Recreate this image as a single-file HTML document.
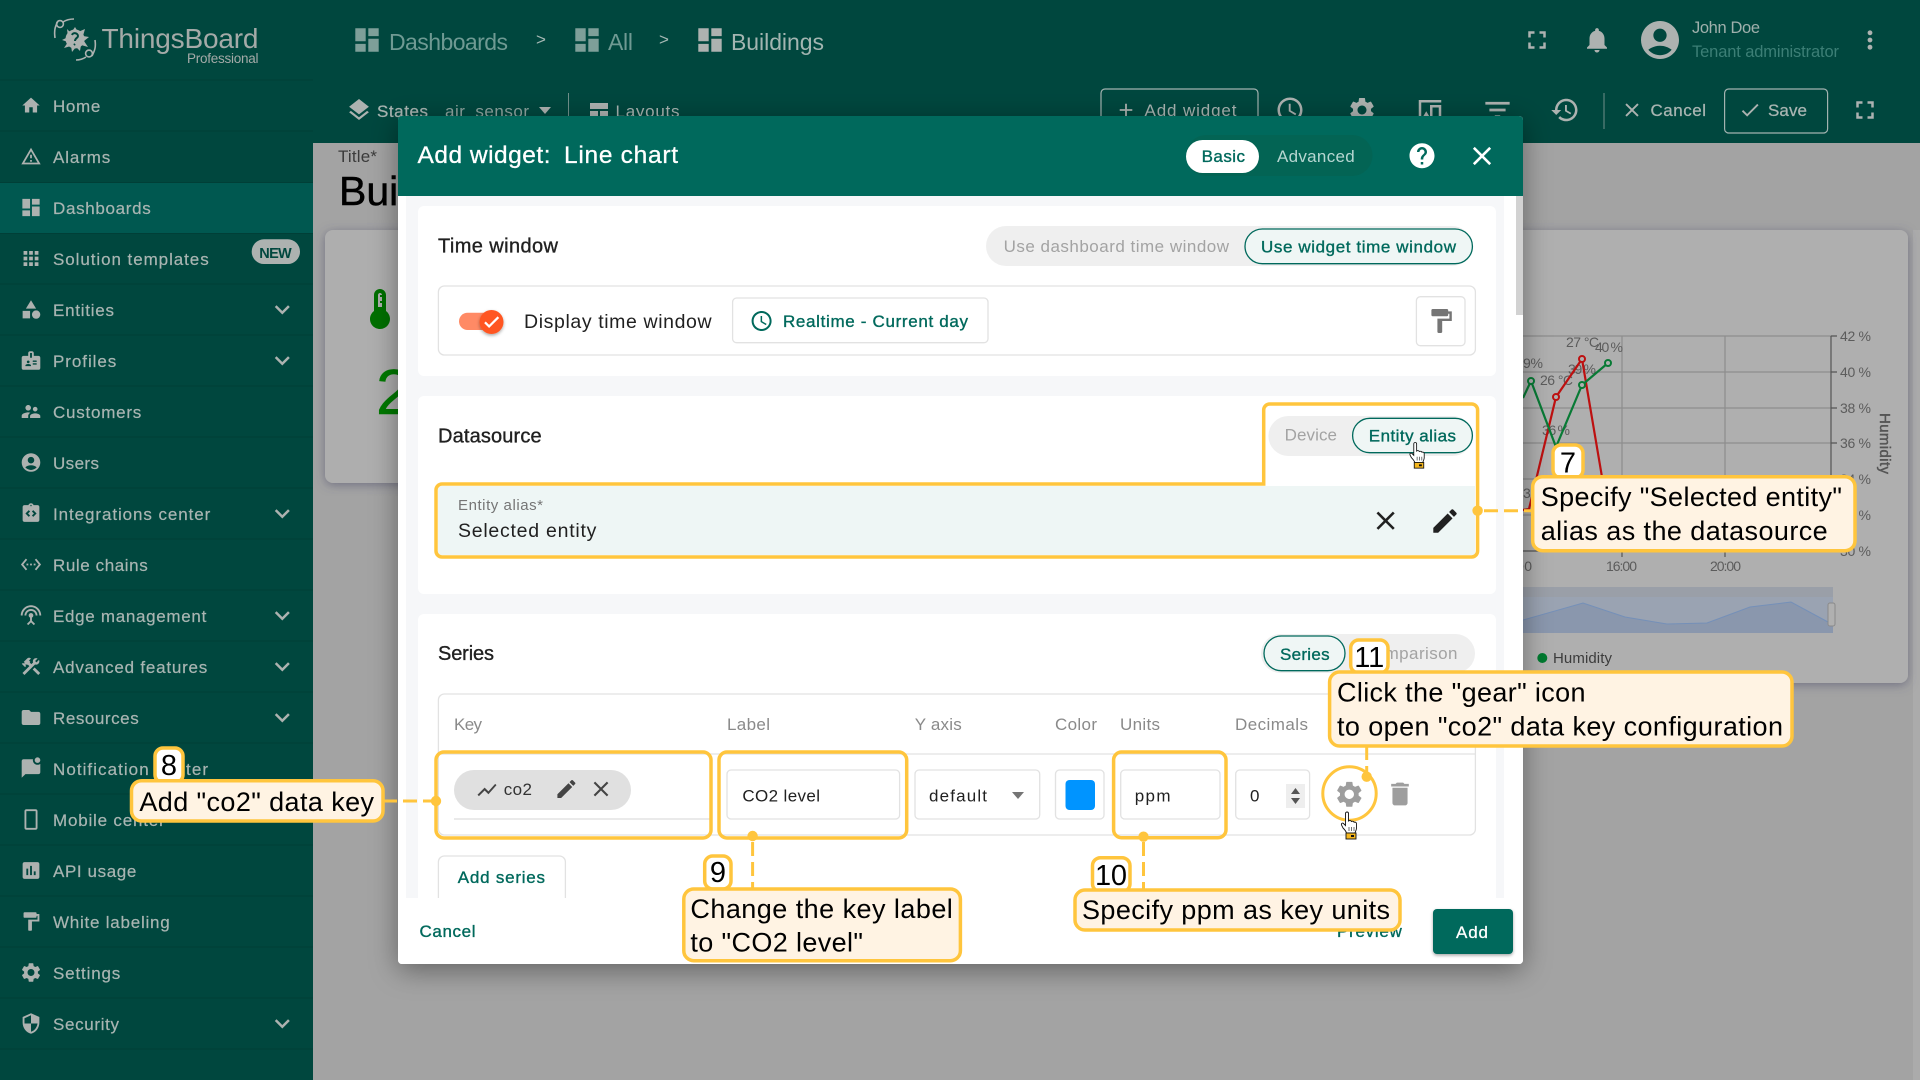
<!DOCTYPE html>
<html lang="en"><head><meta charset="utf-8"><title>ThingsBoard - Add widget</title>
<style>
html,body{margin:0;padding:0;width:1920px;height:1080px;overflow:hidden;background:#a3a3a3}
svg{display:block}
text{font-family:"Liberation Sans",Arial,sans-serif}
.s{font-size:17px;fill:#a9b5b2;stroke:#a9b5b2;stroke-width:.2}
.si{fill:#adb2b0}
.g{fill:#00695c;stroke:#00695c;stroke-width:.35}
.d{fill:#212121}
.dm{fill:#212121;stroke:#212121;stroke-width:.35}
.h{fill:#8a8a8a;font-size:17px}
.off{fill:#a3a3a3;font-size:17px}
.c{font-size:27px;fill:#000}
.n{font-size:29px;fill:#000;text-anchor:middle}
.cb{fill:#fff3e3;stroke:#ffc53d;stroke-width:3.5}
.nb{fill:#fff;stroke:#ffc53d;stroke-width:3.5}
.hl{fill:none;stroke:#ffc53d;stroke-width:3.5}
.ds{stroke:#ffc53d;stroke-width:3;stroke-dasharray:14 6;fill:none}
.dot{fill:#ffc53d}
.ct{font-size:14px;fill:#5c5c5c}
.box{fill:#fff;stroke:#e2e2e2;stroke-width:1.3}
</style></head>
<body>
<svg xmlns="http://www.w3.org/2000/svg" width="1920" height="1080" viewBox="0 0 1920 1080">
<defs>
<filter id="ms" x="-10%" y="-10%" width="120%" height="120%"><feDropShadow dx="0" dy="6" stdDeviation="14" flood-color="#000" flood-opacity=".4"/></filter>
<filter id="cs" x="-5%" y="-5%" width="110%" height="110%"><feDropShadow dx="0" dy="2" stdDeviation="5" flood-color="#4a4a66" flood-opacity=".55"/></filter>
<filter id="ts" x="-30%" y="-30%" width="160%" height="160%"><feDropShadow dx="0" dy="1.5" stdDeviation="1.5" flood-color="#000" flood-opacity=".35"/></filter>
<g id="hand"><path d="M4.500 1.500c0-2 3-2 3 0V9c1-.8 2.500-.5 3 .5 1-.6 2.300-.2 2.600.8 1-.5 2.400 0 2.400 1.500V16c0 2-1 3-1.500 5H5.500C5 19 3.500 17.500 2 16L.5 13c-.5-1.500 1-2.500 2-1.500l2 2z" fill="#fff" stroke="#111" stroke-width=".9"/><path d="M8 15v4M10.500 15v4M13 15v4" stroke="#111" stroke-width=".6"/><rect x="5" y="21" width="10" height="6" fill="#f5b71e" stroke="#111" stroke-width=".9"/><rect x="10" y="23" width="3" height="2" fill="#111"/></g>
</defs>

<!-- page background -->
<rect width="1920" height="1080" fill="#a3a3a3"/>
<rect x="1913" y="230" width="7" height="850" fill="#ababab"/>
<text x="338" y="162" font-size="17" fill="#3b3b3b" textLength="39">Title*</text>
<text x="339" y="205" font-size="41" fill="#000" stroke="#000" stroke-width=".5">Buildings</text>

<!-- widgets behind -->
<rect x="325" y="230" width="300" height="253" rx="8" fill="#aeaeae" filter="url(#cs)"/>
<path transform="translate(380 309) scale(2) translate(-12 -12)" fill="#006f00" d="M15 13V5c0-1.660-1.340-3-3-3S9 3.340 9 5v8c-1.210.91-2 2.370-2 4 0 2.760 2.240 5 5 5s5-2.240 5-5c0-1.630-.79-3.090-2-4zm-4-8c0-.55.45-1 1-1s1 .45 1 1h-1v1h1v2h-1v1h1v2h-2V5z"/>
<text x="376" y="414" font-size="64" fill="#007a00" stroke="#007a00" stroke-width=".5">2</text>

<rect x="1400" y="230" width="508" height="453" rx="8" fill="#afafaf" filter="url(#cs)"/>
<g stroke="#8d8d8d" stroke-width="1.2">
<path d="M1500 336H1831M1500 372H1831M1500 408H1831M1500 443H1831M1500 479H1831M1500 515H1831"/>
<path d="M1622 336V550M1725 336V550"/></g>
<path d="M1500 551H1831M1831 336V551M1831 336h6M1831 372h6M1831 408h6M1831 443h6M1831 479h6M1831 515h6M1831 551h6M1622 551v6M1725 551v6" stroke="#555" stroke-width="1.2" fill="none"/>
<text class="ct" x="1840" y="341" textLength="31">42 %</text>
<text class="ct" x="1840" y="377" textLength="31">40 %</text>
<text class="ct" x="1840" y="413" textLength="31">38 %</text>
<text class="ct" x="1840" y="448" textLength="31">36 %</text>
<text class="ct" x="1840" y="484" textLength="31">34 %</text>
<text class="ct" x="1840" y="520" textLength="31">32 %</text>
<text class="ct" x="1840" y="556" textLength="31">30 %</text>
<text class="ct" x="1606" y="571" textLength="31">16:00</text>
<text class="ct" x="1710" y="571" textLength="31">20:00</text>
<text class="ct" x="1516" y="571" textLength="16">00</text>
<text transform="translate(1880 413) rotate(90)" font-size="15" fill="#555" stroke="#555" stroke-width=".45" textLength="61">Humidity</text>
<rect x="1523" y="587" width="310" height="10" fill="#9a9fa8"/>
<path d="M1523 597H1833V633H1523z" fill="#9aa3b2"/>
<path d="M1523 620L1583 603 1625 617 1667 624 1707 623 1750 607 1791 602 1828 622 1833 622V633H1523z" fill="#8a97ad"/>
<path d="M1523 620L1583 603 1625 617 1667 624 1707 623 1750 607 1791 602 1828 622" fill="none" stroke="#7590b8" stroke-width="1"/>
<rect x="1828" y="603" width="7" height="23" rx="2" fill="#b0b0b0" stroke="#8a8a8a"/>
<circle cx="1542.300" cy="658" r="5" fill="#007a30"/>
<text x="1553" y="663" font-size="15" fill="#3c3c3c" textLength="59">Humidity</text>
<text class="ct" x="1566" y="347" textLength="33">27 °C</text>
<text class="ct" x="1595" y="352" textLength="28">40 %</text>
<text class="ct" x="1523" y="368" textLength="20">9 %</text>
<text class="ct" x="1568" y="374" textLength="28">39 %</text>
<text class="ct" x="1540" y="385" textLength="33">26 °C</text>
<text class="ct" x="1542" y="435" textLength="28">36 %</text>
<text class="ct" x="1523" y="498">3</text>
<path d="M1523 510L1529 509 1556 397 1582 359 1602 477 1612 540" fill="none" stroke="#bd1010" stroke-width="2.200"/>
<path d="M1523 398L1531 381 1556 447 1582 385 1608 363" fill="none" stroke="#087a35" stroke-width="2.200"/>
<g fill="#afafaf" stroke-width="2"><g stroke="#bd1010"><circle cx="1556" cy="397" r="3"/><circle cx="1582" cy="359" r="3"/></g><g stroke="#087a35"><circle cx="1531" cy="381" r="3"/><circle cx="1582" cy="385" r="3"/><circle cx="1608" cy="363" r="3"/></g></g>

<!-- top bar -->
<rect x="0" y="0" width="1920" height="143" fill="#00473e"/>
<g fill="#7e9f99">
<path transform="translate(367 40) scale(1.300) translate(-12 -12)" d="M3 13h8V3H3v10zm0 8h8v-6H3v6zm10 0h8V11h-8v10zm0-18v6h8V3h-8z"/>
<path transform="translate(587 40) scale(1.300) translate(-12 -12)" d="M3 13h8V3H3v10zm0 8h8v-6H3v6zm10 0h8V11h-8v10zm0-18v6h8V3h-8z"/>
</g>
<path fill="#adb2b0" transform="translate(710 40) scale(1.300) translate(-12 -12)" d="M3 13h8V3H3v10zm0 8h8v-6H3v6zm10 0h8V11h-8v10zm0-18v6h8V3h-8z"/>
<text x="389" y="50" font-size="23" fill="#6f9a93" textLength="119">Dashboards</text>
<text x="536" y="45" font-size="17" fill="#a5b8b4">&gt;</text>
<text x="608" y="50" font-size="23" fill="#6f9a93" textLength="25">All</text>
<text x="659" y="45" font-size="17" fill="#a5b8b4">&gt;</text>
<text x="731" y="50" font-size="23" fill="#a3b5b1" textLength="93">Buildings</text>

<g fill="#adb2b0">
<path transform="translate(1537 40) scale(1.250) translate(-12 -12)" d="M7 14H5v5h5v-2H7v-3zm-2-4h2V7h3V5H5v5zm12 7h-3v2h5v-5h-2v3zM14 5v2h3v3h2V5h-5z"/>
<path transform="translate(1597 40) scale(1.250) translate(-12 -12)" d="M12 22c1.100 0 2-.9 2-2h-4c0 1.100.89 2 2 2zm6-6v-5c0-3.070-1.640-5.640-4.500-6.320V4c0-.83-.67-1.500-1.500-1.500s-1.500.67-1.500 1.500v.68C7.630 5.360 6 7.920 6 11v5l-2 2v1h16v-1l-2-2z"/>
<path transform="translate(1660 40) scale(1.900) translate(-12 -12)" d="M12 2C6.480 2 2 6.480 2 12s4.480 10 10 10 10-4.480 10-10S17.520 2 12 2zm0 4c1.930 0 3.500 1.570 3.500 3.500S13.930 13 12 13s-3.500-1.570-3.500-3.500S10.070 6 12 6zm0 14c-2.030 0-4.430-.82-6.140-2.880C7.550 15.800 9.680 15 12 15s4.450.8 6.140 2.120C16.430 19.180 14.030 20 12 20z"/>
<path transform="translate(1870 40) scale(1.200) translate(-12 -12)" d="M12 8c1.100 0 2-.9 2-2s-.9-2-2-2-2 .9-2 2 .9 2 2 2zm0 2c-1.100 0-2 .9-2 2s.9 2 2 2 2-.9 2-2-.9-2-2-2zm0 6c-1.100 0-2 .9-2 2s.9 2 2 2 2-.9 2-2-.9-2-2-2z"/>
</g>
<text x="1692" y="33" font-size="16.500" fill="#9fb0ac" textLength="68">John Doe</text>
<text x="1692" y="57" font-size="16.500" fill="#3c7f76" textLength="147">Tenant administrator</text>

<!-- toolbar -->
<g fill="#adb2b0">
<path transform="translate(359 110) scale(1.100) translate(-12 -12)" d="M11.990 18.540l-7.370-5.730L3 14.070l9 7 9-7-1.630-1.270-7.380 5.740zM12 16l7.360-5.730L21 9l-9-7-9 7 1.630 1.270L12 16z"/>
<path transform="translate(599 110) scale(1) translate(-12 -12)" d="M3 5v6h18V5H3zm0 8v6h8v-6H3zm10 0v6h8v-6h-8z"/>
<path d="M539 107h12l-6 7z"/>
</g>
<text x="377" y="117" font-size="17" fill="#a9b5b2" stroke="#a9b5b2" stroke-width=".25" textLength="51">States</text>
<text x="445" y="117" font-size="17" fill="#8fa5a0" textLength="84">air_sensor</text>
<path d="M568.500 93V129" stroke="#6f8f8a" stroke-width="1"/>
<text x="615.500" y="117" font-size="17" fill="#a9b5b2" textLength="64">Layouts</text>
<rect x="1101" y="89" width="157" height="44" rx="4" fill="none" stroke="#a3b3b0" stroke-width="1.200"/>
<path fill="#adb2b0" transform="translate(1126 110) scale(.9) translate(-12 -12)" d="M19 13h-6v6h-2v-6H5v-2h6V5h2v6h6v2z"/>
<text x="1144.500" y="116" font-size="17" fill="#a9b5b2" textLength="92">Add widget</text>
<g fill="#adb2b0">
<path transform="translate(1290 110) scale(1.250) translate(-12 -12)" d="M11.990 2C6.470 2 2 6.480 2 12s4.470 10 9.990 10C17.520 22 22 17.520 22 12S17.520 2 11.990 2zM12 20c-4.420 0-8-3.580-8-8s3.580-8 8-8 8 3.580 8 8-3.580 8-8 8zm.5-13H11v6l5.250 3.150.75-1.230-4.500-2.670z"/>
<path transform="translate(1362 110) scale(1.250) translate(-12 -12)" d="M19.140 12.940c.04-.3.06-.61.06-.94 0-.32-.02-.64-.07-.94l2.030-1.580c.18-.14.23-.41.12-.61l-1.920-3.320c-.12-.22-.37-.29-.59-.22l-2.390.96c-.5-.38-1.030-.7-1.620-.94l-.36-2.540c-.04-.24-.24-.41-.48-.41h-3.840c-.24 0-.43.17-.47.41l-.36 2.540c-.59.24-1.130.57-1.620.94l-2.390-.96c-.22-.08-.47 0-.59.22L2.740 8.870c-.12.21-.08.47.12.61l2.030 1.580c-.05.3-.09.63-.09.94s.02.64.07.94l-2.030 1.580c-.18.14-.23.41-.12.61l1.920 3.320c.12.22.37.29.59.22l2.390-.96c.5.38 1.030.7 1.620.94l.36 2.540c.05.24.24.41.48.41h3.840c.24 0 .44-.17.47-.41l.36-2.540c.59-.24 1.130-.56 1.620-.94l2.390.96c.22.08.47 0 .59-.22l1.920-3.320c.12-.22.07-.47-.12-.61l-2.010-1.580zM12 15.600c-1.980 0-3.600-1.620-3.600-3.600s1.620-3.600 3.600-3.600 3.600 1.620 3.600 3.600-1.620 3.600-3.600 3.600z"/>
<path transform="translate(1430 110) scale(1.250) translate(-12 -12)" d="M3 4h18v2H5v12h4v2H3V4zm9 4h9v12h-9V8zm2 2v8h5v-8h-5zm-5 3l3 5H6l3-5z"/>
<path transform="translate(1497.500 110) scale(1.350) translate(-12 -12)" d="M10 18h4v-2h-4v2zM3 6v2h18V6H3zm3 7h12v-2H6v2z"/>
<path transform="translate(1565 110) scale(1.250) translate(-12 -12)" d="M13 3c-4.970 0-9 4.030-9 9H1l3.890 3.890.07.14L9 12H6c0-3.870 3.130-7 7-7s7 3.130 7 7-3.130 7-7 7c-1.930 0-3.680-.79-4.940-2.060l-1.420 1.420C8.270 19.990 10.510 21 13 21c4.970 0 9-4.030 9-9s-4.030-9-9-9zm-1 5v5l4.280 2.540.72-1.210-3.500-2.080V8H12z"/>
<path transform="translate(1632 110) scale(.95) translate(-12 -12)" d="M19 6.410L17.590 5 12 10.590 6.410 5 5 6.410 10.590 12 5 17.590 6.410 19 12 13.410 17.590 19 19 17.590 13.410 12z"/>
<path transform="translate(1750 110) scale(.95) translate(-12 -12)" d="M9 16.170L4.830 12l-1.420 1.410L9 19 21 7l-1.410-1.410z"/>
<path transform="translate(1865 110) scale(1.250) translate(-12 -12)" d="M7 14H5v5h5v-2H7v-3zm-2-4h2V7h3V5H5v5zm12 7h-3v2h5v-5h-2v3zM14 5v2h3v3h2V5h-5z"/>
</g>
<path d="M1604 93V129" stroke="#6f8f8a" stroke-width="1"/>
<text x="1650.500" y="116" font-size="17" fill="#a9b5b2" stroke="#a9b5b2" stroke-width=".25" textLength="55.500">Cancel</text>
<rect x="1724.600" y="89" width="103" height="44" rx="4" fill="none" stroke="#a3b3b0" stroke-width="1.200"/>
<text x="1768" y="116" font-size="17" fill="#a9b5b2" stroke="#a9b5b2" stroke-width=".25" textLength="39">Save</text>

<!-- sidebar -->
<rect x="0" y="0" width="313" height="1080" fill="#00473e"/>
<rect x="0" y="183" width="313" height="50" fill="#005850"/>
<path d="M0 80H313M0 131H313M0 182.500H313M0 233.500H313M0 284H313M0 335H313M0 386H313M0 437H313M0 488H313M0 539H313M0 590H313M0 641H313M0 692H313M0 743H313M0 794H313M0 845H313M0 896H313M0 947H313M0 998H313M0 1049H313" stroke="#003f37" stroke-width="1"/>

<!-- logo -->
<g fill="none" stroke="#adb2b0" stroke-width="1.600">
<circle cx="60" cy="24" r="3.400"/><circle cx="89" cy="53.500" r="3.400"/>
<path d="M55 38C54 30 55 27 58 21M63 22C66 20 70 19 74 19M95 40C96 47 95 50 92 56M86 57C83 59 79 60 76 60"/>
</g>
<g fill="#adb2b0"><path d="M67 29L71 33 75 27 78 32 85 29 83 36 89 37 84 41 88 47 81 45 80 51 76 47 72 52 71 46 64 48 68 42 62 40 68 37z"/>
<circle cx="75" cy="39" r="9.500"/></g>
<path d="M72 35c1-3 6-2 6 1 0 2-3 2-3 5M74 45l1-1" stroke="#00473e" stroke-width="2" fill="none"/>
<text x="101.500" y="48" font-size="28" fill="#a4aaa8" textLength="157">ThingsBoard</text>
<text x="187" y="63" font-size="13.500" fill="#a4aaa8" textLength="71.500">Professional</text>

<!-- sidebar labels -->
<text class="s" x="53" y="112" textLength="47.300">Home</text>
<text class="s" x="53" y="163" textLength="57.300">Alarms</text>
<text class="s" x="53" y="214" textLength="97.700">Dashboards</text>
<text class="s" x="53" y="265" textLength="155.700">Solution templates</text>
<text class="s" x="53" y="316" textLength="61">Entities</text>
<text class="s" x="53" y="367" textLength="63.300">Profiles</text>
<text class="s" x="53" y="418" textLength="88.300">Customers</text>
<text class="s" x="53" y="469" textLength="46">Users</text>
<text class="s" x="53" y="520" textLength="157.300">Integrations center</text>
<text class="s" x="53" y="571" textLength="94.700">Rule chains</text>
<text class="s" x="53" y="622" textLength="153.300">Edge management</text>
<text class="s" x="53" y="673" textLength="154.300">Advanced features</text>
<text class="s" x="53" y="724" textLength="85.700">Resources</text>
<text class="s" x="53" y="775" textLength="155">Notification center</text>
<text class="s" x="53" y="826" textLength="111.700">Mobile center</text>
<text class="s" x="53" y="877" textLength="83.300">API usage</text>
<text class="s" x="53" y="928" textLength="116.700">White labeling</text>
<text class="s" x="53" y="979" textLength="67.300">Settings</text>
<text class="s" x="53" y="1030" textLength="66">Security</text>

<rect x="251.700" y="239.300" width="48.300" height="24.700" rx="12.300" fill="#adb2b0"/>
<text x="259.300" y="258" font-size="14.500" font-weight="700" fill="#00473e" textLength="32.400">NEW</text>

<!-- sidebar icons -->
<g class="si">
<path transform="translate(31 105.500) scale(.87) translate(-12 -12)" d="M10 20v-6h4v6h5v-8h3L12 3 2 12h3v8z"/>
<path transform="translate(31 156.500) scale(.88) translate(-12 -12)" d="M12 5.990L19.530 19H4.470L12 5.990M12 2L1 21h22L12 2zm1 14h-2v2h2v-2zm0-6h-2v4h2v-4z"/>
<path transform="translate(31 207.500) scale(.96) translate(-12 -12)" d="M3 13h8V3H3v10zm0 8h8v-6H3v6zm10 0h8V11h-8v10zm0-18v6h8V3h-8z"/>
<path transform="translate(31 258.500) scale(.93) translate(-12 -12)" d="M4 8h4V4H4v4zm6 12h4v-4h-4v4zm-6 0h4v-4H4v4zm0-6h4v-4H4v4zm6 0h4v-4h-4v4zm6-10v4h4V4h-4zm-6 4h4V4h-4v4zm6 6h4v-4h-4v4zm0 6h4v-4h-4v4z"/>
<path transform="translate(31 309.500) scale(.93) translate(-12 -12)" d="M12 2l-5.500 9h11zM3 13.500h8v8H3zM22 17.500a4.500 4.500 0 1 1-9 0 4.500 4.500 0 1 1 9 0z"/>
<path transform="translate(31 360.500) scale(.93) translate(-12 -12)" d="M20 7h-5V4c0-1.100-.9-2-2-2h-2c-1.100 0-2 .9-2 2v3H4c-1.100 0-2 .9-2 2v11c0 1.100.9 2 2 2h16c1.100 0 2-.9 2-2V9c0-1.100-.9-2-2-2zM9 12c.83 0 1.500.67 1.500 1.500S9.830 15 9 15s-1.500-.67-1.500-1.500S8.170 12 9 12zm3 6H6v-.43c0-.6.36-1.150.92-1.390C7.560 15.900 8.260 15.750 9 15.750s1.440.15 2.080.43c.55.24.92.78.92 1.390V18zm1-9h-2V4h2v5zm4.500 7.500h-3c-.41 0-.75-.34-.75-.75s.34-.75.75-.75h3c.41 0 .75.34.75.75s-.34.75-.75.75zm0-3h-3c-.41 0-.75-.34-.75-.75s.34-.75.75-.75h3c.41 0 .75.34.75.75s-.34.75-.75.75z"/>
<path transform="translate(31 411.500) scale(.93) translate(-12 -12)" d="M16.500 12c1.380 0 2.490-1.120 2.490-2.500S17.880 7 16.500 7C15.120 7 14 8.120 14 9.500s1.120 2.500 2.500 2.500zM9 11c1.660 0 2.990-1.340 2.990-3S10.660 5 9 5C7.340 5 6 6.340 6 8s1.340 3 3 3zm7.500 3c-1.830 0-5.500.92-5.500 2.750V19h11v-2.250c0-1.830-3.670-2.750-5.500-2.750zM9 13c-2.330 0-7 1.170-7 3.500V19h7v-2.250c0-.85.33-2.340 2.370-3.470C10.500 13.100 9.660 13 9 13z"/>
<path transform="translate(31 462.500) scale(.93) translate(-12 -12)" d="M12 2C6.480 2 2 6.480 2 12s4.480 10 10 10 10-4.480 10-10S17.520 2 12 2zm0 4c1.930 0 3.500 1.570 3.500 3.500S13.930 13 12 13s-3.500-1.570-3.500-3.500S10.070 6 12 6zm0 14c-2.030 0-4.430-.82-6.140-2.880C7.550 15.800 9.680 15 12 15s4.450.8 6.140 2.120C16.430 19.180 14.030 20 12 20z"/>
<path transform="translate(31 513.500) scale(.93) translate(-12 -12)" d="M19 3h-4.180C14.400 1.840 13.300 1 12 1c-1.300 0-2.400.84-2.820 2H5c-1.100 0-2 .9-2 2v14c0 1.100.9 2 2 2h14c1.100 0 2-.9 2-2V5c0-1.100-.9-2-2-2zm-7-.25c.41 0 .75.34.75.75s-.34.75-.75.75-.75-.34-.75-.75.34-.75.75-.75zM11 14.170l-1.410 1.420L6 12l3.590-3.590L11 9.830 8.830 12 11 14.170zm3.410 1.420L13 14.170 15.170 12 13 9.830l1.410-1.420L18 12l-3.590 3.590z"/>
<path transform="translate(31 564.500) scale(.9) translate(-12 -12)" d="M7.770 6.760L6.230 5.480.82 12l5.410 6.520 1.540-1.280L3.420 12l4.350-5.240zM7 13h2v-2H7v2zm10-2h-2v2h2v-2zm-6 2h2v-2h-2v2zm6.770-7.520l-1.540 1.280L20.580 12l-4.350 5.240 1.540 1.280L23.180 12l-5.410-6.520z"/>
<path transform="translate(31 615.500) scale(.93) translate(-12 -12)" d="M12 5c-3.870 0-7 3.130-7 7h2c0-2.760 2.240-5 5-5s5 2.240 5 5h2c0-3.870-3.130-7-7-7zm1 9.290c.88-.39 1.500-1.260 1.500-2.290 0-1.380-1.120-2.500-2.500-2.500S9.500 10.620 9.500 12c0 1.020.62 1.900 1.500 2.290v3.300L7.590 21 9 22.410l3-3 3 3L16.410 21 13 17.590v-3.300zM12 1C5.930 1 1 5.930 1 12h2c0-4.970 4.030-9 9-9s9 4.030 9 9h2c0-6.070-4.930-11-11-11z"/>
<path transform="translate(31 666.500) scale(.93) translate(-12 -12)" d="M13.783 15.172l2.121-2.121 5.996 5.996-2.121 2.121zM17.500 10c1.930 0 3.500-1.570 3.500-3.500 0-.58-.16-1.120-.41-1.600l-2.700 2.700-1.490-1.490 2.700-2.700c-.48-.25-1.020-.41-1.600-.41C15.570 3 14 4.570 14 6.500c0 .41.08.8.21 1.160l-1.850 1.850-1.780-1.780.71-.71-1.410-1.410L12 3.490c-1.170-1.170-3.070-1.170-4.240 0L4.220 7.030l1.410 1.410H2.810l-.71.71 3.540 3.540.71-.71V9.150l1.410 1.410.71-.71 1.780 1.780-7.410 7.410 2.120 2.120L16.340 9.790c.36.13.75.21 1.160.21z"/>
<path transform="translate(31 717.500) scale(.93) translate(-12 -12)" d="M10 4H4c-1.100 0-1.990.9-1.990 2L2 18c0 1.100.9 2 2 2h16c1.100 0 2-.9 2-2V8c0-1.100-.9-2-2-2h-8l-2-2z"/>
<path transform="translate(31 768.500) scale(.93) translate(-12 -12)" d="M22 6.980V16c0 1.100-.9 2-2 2H6l-4 4V4c0-1.100.9-2 2-2h10.100c-.06.32-.1.66-.1 1 0 2.760 2.240 5 5 5 1.130 0 2.160-.39 3-1.020zM16 3c0 1.660 1.340 3 3 3s3-1.340 3-3-1.340-3-3-3-3 1.340-3 3z"/>
<path transform="translate(31 819.500) scale(.93) translate(-12 -12)" d="M17 1.010L7 1c-1.100 0-2 .9-2 2v18c0 1.100.9 2 2 2h10c1.100 0 2-.9 2-2V3c0-1.100-.9-1.990-2-1.990zM17 21H7V3h10v18z"/>
<path transform="translate(31 870.500) scale(.93) translate(-12 -12)" d="M19 3H5c-1.100 0-2 .9-2 2v14c0 1.100.9 2 2 2h14c1.100 0 2-.9 2-2V5c0-1.100-.9-2-2-2zM9 17H7v-7h2v7zm4 0h-2V7h2v10zm4 0h-2v-4h2v4z"/>
<path transform="translate(31 921.500) scale(.93) translate(-12 -12)" d="M18 4V3c0-.55-.45-1-1-1H5c-.55 0-1 .45-1 1v4c0 .55.45 1 1 1h12c.55 0 1-.45 1-1V6h1v4H9v11c0 .55.45 1 1 1h2c.55 0 1-.45 1-1v-9h8V4h-3z"/>
<path transform="translate(31 972.500) scale(.96) translate(-12 -12)" d="M19.140 12.940c.04-.3.06-.61.06-.94 0-.32-.02-.64-.07-.94l2.030-1.580c.18-.14.23-.41.12-.61l-1.920-3.320c-.12-.22-.37-.29-.59-.22l-2.390.96c-.5-.38-1.030-.7-1.620-.94l-.36-2.540c-.04-.24-.24-.41-.48-.41h-3.840c-.24 0-.43.17-.47.41l-.36 2.540c-.59.24-1.130.57-1.620.94l-2.390-.96c-.22-.08-.47 0-.59.22L2.740 8.870c-.12.21-.08.47.12.61l2.030 1.580c-.05.3-.09.63-.09.94s.02.64.07.94l-2.030 1.580c-.18.14-.23.41-.12.61l1.920 3.320c.12.22.37.29.59.22l2.390-.96c.5.38 1.030.7 1.620.94l.36 2.540c.05.24.24.41.48.41h3.840c.24 0 .44-.17.47-.41l.36-2.540c.59-.24 1.130-.56 1.620-.94l2.390.96c.22.08.47 0 .59-.22l1.920-3.320c.12-.22.07-.47-.12-.61l-2.010-1.580zM12 15.600c-1.980 0-3.600-1.620-3.600-3.600s1.620-3.600 3.600-3.600 3.600 1.620 3.600 3.600-1.620 3.600-3.600 3.600z"/>
<path transform="translate(31 1023.500) scale(.93) translate(-12 -12)" d="M12 1L3 5v6c0 5.550 3.840 10.740 9 12 5.160-1.260 9-6.450 9-12V5l-9-4zm0 10.990h7c-.53 4.120-3.280 7.790-7 8.940V12H5V6.300l7-3.110v8.800z"/>
<path transform="translate(282.300 309.500) scale(1.250) translate(-12 -12)" d="M16.590 8.590L12 13.170 7.410 8.590 6 10l6 6 6-6z"/>
<path transform="translate(282.300 360.500) scale(1.250) translate(-12 -12)" d="M16.590 8.590L12 13.170 7.410 8.590 6 10l6 6 6-6z"/>
<path transform="translate(282.300 513.500) scale(1.250) translate(-12 -12)" d="M16.590 8.590L12 13.170 7.410 8.590 6 10l6 6 6-6z"/>
<path transform="translate(282.300 615.500) scale(1.250) translate(-12 -12)" d="M16.590 8.590L12 13.170 7.410 8.590 6 10l6 6 6-6z"/>
<path transform="translate(282.300 666.500) scale(1.250) translate(-12 -12)" d="M16.590 8.590L12 13.170 7.410 8.590 6 10l6 6 6-6z"/>
<path transform="translate(282.300 717.500) scale(1.250) translate(-12 -12)" d="M16.590 8.590L12 13.170 7.410 8.590 6 10l6 6 6-6z"/>
<path transform="translate(282.300 1023.500) scale(1.250) translate(-12 -12)" d="M16.590 8.590L12 13.170 7.410 8.590 6 10l6 6 6-6z"/>
</g>

<!-- modal -->
<rect x="398" y="116" width="1125" height="848" rx="4" fill="#fff" filter="url(#ms)"/>
<path d="M398 196V120a4 4 0 0 1 4-4H1519a4 4 0 0 1 4 4V196z" fill="#00695c"/>
<text x="417.500" y="163" font-size="24.500" fill="#fff" stroke="#fff" stroke-width=".3" textLength="133">Add widget:</text>
<text x="564" y="163" font-size="24.500" fill="#fff" stroke="#fff" stroke-width=".3" textLength="114">Line chart</text>
<rect x="1186" y="135" width="186.500" height="41" rx="20.500" fill="#05604f" fill-opacity=".55"/>
<rect x="1186" y="140" width="73" height="33" rx="16.500" fill="#fff"/>
<text x="1201.600" y="162" font-size="17" class="g" textLength="43.400">Basic</text>
<text x="1277" y="162" font-size="17" fill="#b6d6d1" textLength="77.700">Advanced</text>
<path fill="#fff" transform="translate(1422 155.700) scale(1.250) translate(-12 -12)" d="M12 2C6.480 2 2 6.480 2 12s4.480 10 10 10 10-4.480 10-10S17.520 2 12 2zm1 17h-2v-2h2v2zm2.070-7.750l-.9.92C13.450 12.900 13 13.500 13 15h-2v-.5c0-1.100.45-2.100 1.170-2.830l1.240-1.260c.37-.36.59-.86.59-1.410 0-1.100-.9-2-2-2s-2 .9-2 2H8c0-2.210 1.790-4 4-4s4 1.790 4 4c0 .88-.36 1.680-.93 2.250z"/>
<path fill="#fff" transform="translate(1482 156) scale(1.300) translate(-12 -12)" d="M19 6.410L17.590 5 12 10.590 6.410 5 5 6.410 10.590 12 5 17.590 6.410 19 12 13.410 17.590 19 19 17.590 13.410 12z"/>

<!-- modal body -->
<rect x="406" y="196" width="1098" height="702" fill="#f6f7f9"/>
<rect x="1516" y="196" width="7" height="119" fill="#d2d2d2"/>
<rect x="418" y="206" width="1078" height="170" rx="6" fill="#fff"/>
<rect x="418" y="396" width="1078" height="198" rx="6" fill="#fff"/>
<rect x="418" y="614" width="1078" height="290" rx="6" fill="#fff"/>

<!-- time window -->
<text x="438" y="252.700" font-size="20" class="dm" textLength="120">Time window</text>
<rect x="986" y="226" width="486" height="40" rx="20" fill="#efefef"/>
<text class="off" x="1003.600" y="252" textLength="225.400">Use dashboard time window</text>
<rect x="1245" y="229" width="227.400" height="34.700" rx="17.300" fill="#eff6f5" stroke="#00695c" stroke-width="1.300"/>
<text x="1261" y="252.700" font-size="17" class="g" textLength="195">Use widget time window</text>
<rect x="438.400" y="286" width="1037" height="69" rx="6" fill="#fff" stroke="#e2e2e2" stroke-width="1.300"/>
<rect x="459" y="312.700" width="36" height="17.300" rx="8.600" fill="#ff8a65"/>
<circle cx="491.500" cy="322" r="12" fill="#ff5722" filter="url(#ts)"/>
<path fill="#fff" stroke="#fff" stroke-width=".8" transform="translate(491.500 322) scale(.8) translate(-12 -12)" d="M9 16.170L4.830 12l-1.420 1.410L9 19 21 7l-1.410-1.410z"/>
<text x="524" y="328" font-size="19.500" class="d" textLength="187.600">Display time window</text>
<rect class="box" x="732.600" y="298" width="255.400" height="44.700" rx="4"/>
<path fill="#00695c" transform="translate(761.600 321) translate(-12 -12)" d="M11.990 2C6.470 2 2 6.480 2 12s4.470 10 9.990 10C17.520 22 22 17.520 22 12S17.520 2 11.990 2zM12 20c-4.420 0-8-3.580-8-8s3.580-8 8-8 8 3.580 8 8-3.580 8-8 8zm.5-13H11v6l5.250 3.150.75-1.230-4.500-2.670z"/>
<text x="783" y="327" font-size="17" class="g" textLength="185">Realtime - Current day</text>
<rect class="box" x="1416.400" y="296.700" width="48.600" height="49" rx="4"/>
<path fill="#757575" transform="translate(1441 321) scale(1.200) translate(-12 -12)" d="M18 4V3c0-.55-.45-1-1-1H5c-.55 0-1 .45-1 1v4c0 .55.45 1 1 1h12c.55 0 1-.45 1-1V6h1v4H9v11c0 .55.45 1 1 1h2c.55 0 1-.45 1-1v-9h8V4h-3z"/>

<!-- datasource -->
<text x="438" y="442.700" font-size="20" class="dm" textLength="103.600">Datasource</text>
<rect x="1268.400" y="416" width="204" height="40" rx="20" fill="#efefef"/>
<text class="off" x="1284.600" y="440.700" textLength="52.400">Device</text>
<rect x="1352.600" y="418.300" width="119.800" height="34.400" rx="17.200" fill="#eff6f5" stroke="#00695c" stroke-width="1.300"/>
<text x="1368.800" y="441.700" font-size="17" class="g" textLength="87.200">Entity alias</text>
<rect x="438" y="486" width="1037" height="69" fill="#eef6f5"/>
<text x="458" y="510" font-size="15" fill="#757575" textLength="85">Entity alias*</text>
<text x="458" y="537" font-size="19.500" class="d" textLength="138.400">Selected entity</text>
<path fill="#212121" transform="translate(1385.600 520.700) scale(1.300) translate(-12 -12)" d="M19 6.410L17.590 5 12 10.590 6.410 5 5 6.410 10.590 12 5 17.590 6.410 19 12 13.410 17.590 19 19 17.590 13.410 12z"/>
<path fill="#212121" transform="translate(1445 521) scale(1.300) translate(-12 -12)" d="M3 17.250V21h3.750L17.810 9.940l-3.750-3.750L3 17.250zM20.710 7.040c.39-.39.39-1.020 0-1.410l-2.340-2.340c-.39-.39-1.020-.39-1.410 0l-1.830 1.830 3.750 3.750 1.830-1.830z"/>
<path class="hl" d="M442 484H1263.700V410a6 6 0 0 1 6-6H1471.600a6 6 0 0 1 6 6V551a6 6 0 0 1-6 6H442a6 6 0 0 1-6-6V490a6 6 0 0 1 6-6z"/>
<use href="#hand" transform="translate(1409.500 442.500) scale(.95)"/>

<!-- series -->
<text x="438" y="660" font-size="20" class="dm" textLength="56">Series</text>
<rect x="1261" y="634" width="214" height="39" rx="19.500" fill="#efefef"/>
<rect x="1264" y="636" width="81" height="34.700" rx="17.300" fill="#eff6f5" stroke="#00695c" stroke-width="1.300"/>
<text x="1280" y="660" font-size="17" class="g" textLength="49.600">Series</text>
<text class="off" x="1362" y="659" textLength="95.500">Comparison</text>
<rect x="438.400" y="694" width="1037" height="141" rx="6" fill="#fff" stroke="#e2e2e2" stroke-width="1.300"/>
<path d="M438.400 754H1475" stroke="#e2e2e2" stroke-width="1.300"/>
<text class="h" x="454" y="730" textLength="28">Key</text>
<text class="h" x="727" y="730" textLength="43">Label</text>
<text class="h" x="914.700" y="730" textLength="47">Y axis</text>
<text class="h" x="1055" y="730" textLength="42">Color</text>
<text class="h" x="1120" y="730" textLength="40">Units</text>
<text class="h" x="1235" y="730" textLength="73">Decimals</text>
<rect x="454" y="770" width="177" height="40" rx="20" fill="#e0e0e0"/>
<path fill="#444" transform="translate(487 790) scale(.95) translate(-12 -12)" d="M3.500 18.490l6-6.010 4 4L22 6.920l-1.410-1.410-7.090 7.970-4-4L2 16.990z"/>
<text x="503.700" y="795" font-size="17" fill="#333" textLength="28.300">co2</text>
<path fill="#444" transform="translate(566.400 789) scale(1) translate(-12 -12)" d="M3 17.250V21h3.750L17.810 9.940l-3.750-3.750L3 17.250zM20.710 7.040c.39-.39.39-1.020 0-1.410l-2.340-2.340c-.39-.39-1.020-.39-1.410 0l-1.830 1.830 3.750 3.750 1.830-1.830z"/>
<path fill="#444" transform="translate(601 789) scale(1.050) translate(-12 -12)" d="M19 6.410L17.590 5 12 10.590 6.410 5 5 6.410 10.590 12 5 17.590 6.410 19 12 13.410 17.590 19 19 17.590 13.410 12z"/>
<path d="M454 819H711" stroke="#ddd" stroke-width="1.300"/>
<rect class="box" x="727" y="770" width="172.600" height="49" rx="4"/>
<text x="742.400" y="801.700" font-size="17" class="d" textLength="77.600">CO2 level</text>
<rect class="box" x="915" y="770" width="124.700" height="49" rx="4"/>
<text x="929" y="801.700" font-size="17" class="d" textLength="58">default</text>
<path d="M1012 792h12l-6 7z" fill="#757575"/>
<rect class="box" x="1055.500" y="770" width="48.500" height="49" rx="4"/>
<rect x="1065.500" y="780" width="29.500" height="30" rx="4" fill="#0094ff"/>
<rect class="box" x="1120.700" y="770" width="99.300" height="49" rx="4"/>
<text x="1134.700" y="801.700" font-size="17" class="d" textLength="35.800">ppm</text>
<rect class="box" x="1235.700" y="770" width="73.900" height="49" rx="4"/>
<text x="1250" y="801.700" font-size="17" class="d">0</text>
<rect x="1286" y="784" width="19" height="24" fill="#eee"/>
<path d="M1291 794l4.500-6 4.500 6zM1291 798l4.500 6 4.500-6z" fill="#555"/>
<circle cx="1349.500" cy="793.500" r="26.700" fill="#fff" stroke="#ffc53d" stroke-width="3"/>
<path fill="#9e9e9e" transform="translate(1349.300 794.300) scale(1.300) translate(-12 -12)" d="M19.140 12.940c.04-.3.06-.61.06-.94 0-.32-.02-.64-.07-.94l2.030-1.580c.18-.14.23-.41.12-.61l-1.920-3.320c-.12-.22-.37-.29-.59-.22l-2.390.96c-.5-.38-1.030-.7-1.620-.94l-.36-2.540c-.04-.24-.24-.41-.48-.41h-3.840c-.24 0-.43.17-.47.41l-.36 2.540c-.59.24-1.130.57-1.620.94l-2.390-.96c-.22-.08-.47 0-.59.22L2.740 8.870c-.12.21-.08.47.12.61l2.030 1.580c-.05.3-.09.63-.09.94s.02.64.07.94l-2.030 1.580c-.18.14-.23.41-.12.61l1.920 3.320c.12.22.37.29.59.22l2.390-.96c.5.38 1.030.7 1.620.94l.36 2.540c.05.24.24.41.48.41h3.840c.24 0 .44-.17.47-.41l.36-2.540c.59-.24 1.130-.56 1.620-.94l2.390.96c.22.08.47 0 .59-.22l1.920-3.320c.12-.22.07-.47-.12-.61l-2.010-1.580zM12 15.600c-1.980 0-3.600-1.620-3.600-3.600s1.620-3.600 3.600-3.600 3.600 1.620 3.600 3.600-1.620 3.600-3.600 3.600z"/>
<path fill="#9e9e9e" transform="translate(1400 794) scale(1.260) translate(-12 -12)" d="M6 19c0 1.100.9 2 2 2h8c1.100 0 2-.9 2-2V7H6v12zM19 4h-3.500l-1-1h-5l-1 1H5v2h14V4z"/>
<use href="#hand" transform="translate(1341 812)"/>
<path d="M438.400 898V862a6 6 0 0 1 6-6H559.400a6 6 0 0 1 6 6V898" fill="#fff" stroke="#e2e2e2" stroke-width="1.300"/>
<text x="457.800" y="883" font-size="17" class="g" textLength="87.200">Add series</text>

<!-- footer -->
<rect x="398" y="898" width="1125" height="66" rx="4" fill="#fff"/>
<text x="419.500" y="937" font-size="17" class="g" textLength="56">Cancel</text>
<text x="1337" y="937" font-size="17" class="g" textLength="64.800">Preview</text>
<rect x="1433" y="909" width="80" height="45" rx="4" fill="#00695c" filter="url(#ts)"/>
<text x="1456" y="938" font-size="17" fill="#fff" stroke="#fff" stroke-width=".25" textLength="32">Add</text>

<!-- annotation highlights -->
<rect class="hl" x="436" y="752" width="275" height="86" rx="8"/>
<rect class="hl" x="719" y="752" width="187.700" height="86" rx="8"/>
<rect class="hl" x="1113.600" y="752" width="112.400" height="85.700" rx="8"/>

<!-- connectors -->
<circle class="dot" cx="1477.600" cy="510.700" r="5.200"/>
<path class="ds" d="M1484 510.700H1534"/>
<circle class="dot" cx="436" cy="801" r="5.200"/>
<path class="ds" d="M383 801H432"/>
<circle class="dot" cx="752.600" cy="836" r="5.200"/>
<path class="ds" d="M752.600 842V890"/>
<circle class="dot" cx="1143.500" cy="836.700" r="5.200"/>
<path class="ds" d="M1143.500 842V890"/>
<circle class="dot" cx="1366.700" cy="776.700" r="5.200"/>
<path class="ds" d="M1366.700 746V772"/>

<!-- callout 7 -->
<rect class="nb" x="1553" y="445" width="30" height="33" rx="8"/>
<text class="n" x="1568" y="472.500">7</text>
<rect class="cb" x="1532.700" y="476.700" width="322.300" height="74" rx="10"/>
<text class="c" x="1540.700" y="506" textLength="301.300">Specify "Selected entity"</text>
<text class="c" x="1540.700" y="540" textLength="287">alias as the datasource</text>

<!-- callout 8 -->
<rect class="nb" x="155" y="748" width="28" height="34.700" rx="8"/>
<text class="n" x="169" y="775">8</text>
<rect class="cb" x="131.500" y="780.700" width="251.500" height="40.300" rx="10"/>
<text class="c" x="139.400" y="811" textLength="234.600">Add "co2" data key</text>

<!-- callout 9 -->
<rect class="nb" x="704.700" y="856" width="26.300" height="33" rx="8"/>
<text class="n" x="718" y="882">9</text>
<rect class="cb" x="683.800" y="889" width="276.600" height="71.700" rx="10"/>
<text class="c" x="690.400" y="918" textLength="262.400">Change the key label</text>
<text class="c" x="690.400" y="951.700" textLength="172.600">to "CO2 level"</text>

<!-- callout 10 -->
<rect class="nb" x="1092.500" y="857.700" width="37.500" height="34" rx="8"/>
<text class="n" x="1111" y="885" textLength="32">10</text>
<rect class="cb" x="1075" y="890" width="325" height="40" rx="10"/>
<text class="c" x="1082" y="919" textLength="308">Specify ppm as key units</text>

<!-- callout 11 -->
<rect class="nb" x="1350.700" y="640" width="37.300" height="33" rx="8"/>
<text class="n" x="1369.300" y="667" textLength="30">11</text>
<rect class="cb" x="1329.600" y="672" width="462.400" height="74" rx="10"/>
<text class="c" x="1337" y="701.700" textLength="248.500">Click the "gear" icon</text>
<text class="c" x="1337" y="735.700" textLength="446">to open "co2" data key configuration</text>
</svg>
</body></html>
